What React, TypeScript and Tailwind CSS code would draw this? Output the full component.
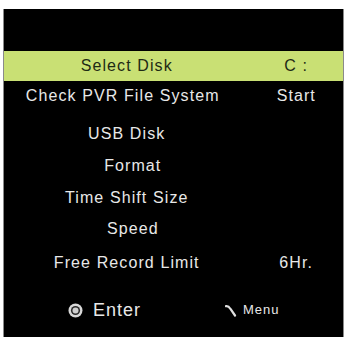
import React from "react";

type Row = { label: string; value?: string; selected?: boolean; h: string; shift?: string };

const rows: Row[] = [
  { label: "Select Disk", value: "C :", selected: true, h: "h-[30px] mt-[42px]" },
  { label: "Check PVR File System", value: "Start", h: "h-[30px]", shift: "pr-[8px]" },
  { label: "USB Disk", h: "h-[32px] mt-[7px]" },
  { label: "Format", h: "h-[32px]", shift: "pl-[12px]" },
  { label: "Time Shift Size", h: "h-[31px]" },
  { label: "Speed", h: "h-[31px]", shift: "pl-[12px]" },
  { label: "Free Record Limit", value: "6Hr.", h: "h-[32px] mt-[3px]" },
];

function RowView({ r }: { r: Row }) {
  return (
    <div
      className={`flex items-center ${r.h} ${
        r.selected ? "bg-[#c9e074] text-[#1e2a14]" : "text-[#e8e8e8]"
      }`}
    >
      <div className={`w-[252px] text-center ${r.shift ?? ""}`}>{r.label}</div>
      <div className="w-[96px] text-center">{r.value ?? ""}</div>
    </div>
  );
}

export default function App() {
  return (
    <div
      className="w-[345px] h-[337px] bg-white pt-[9px] pl-[3px] overflow-hidden"
      style={{ fontFamily: '"Liberation Sans", Arial, sans-serif' }}
    >
      <div className="w-[341px] h-[328px] bg-black border-x border-[#8a8a8a] flex flex-col text-[16px] tracking-[1.1px]">
        {rows.map((r) => (
          <RowView key={r.label} r={r} />
        ))}
        <div className="flex items-center h-[32px] mt-[15px] text-[#e8e8e8]">
          <div className="w-[64px]" />
          <svg width="15" height="15" viewBox="0 0 15 15" className="shrink-0">
            <circle cx="7.5" cy="7.5" r="7" fill="#d8d8d8" />
            <circle cx="7.5" cy="7.5" r="4.6" fill="#2a2a2a" />
            <circle cx="7.5" cy="7.5" r="3" fill="#cfcfcf" />
          </svg>
          <span className="ml-[10px] text-[18px] tracking-[1px]">Enter</span>
          <div className="w-[84px]" />
          <svg width="12" height="13" viewBox="0 0 12 13" className="shrink-0">
            <path
              d="M1 2.2 Q3.5 1.8 5.5 5 L10 11.5"
              stroke="#e0e0e0"
              strokeWidth="2.2"
              fill="none"
              strokeLinecap="round"
            />
          </svg>
          <span className="ml-[6px] text-[13px] tracking-[1px]">Menu</span>
        </div>
      </div>
    </div>
  );
}
